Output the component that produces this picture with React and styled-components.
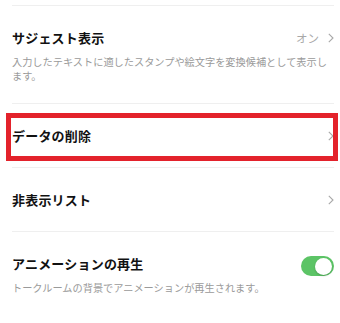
import React from 'react';
import styled, { createGlobalStyle } from 'styled-components';

const GlobalStyle = createGlobalStyle`
  body {
    margin: 0;
    background: #ffffff;
    font-family: "Noto Sans CJK JP", "Noto Sans", sans-serif;
  }
`;

const Page = styled.div`
  width: 340px;
  height: 323px;
  overflow: hidden;
  background: #ffffff;
  padding: 5px 6px 0 12px;
  box-sizing: border-box;
`;

const Row = styled.div`
  position: relative;
  border-top: 1px solid #efefef;
  min-height: 64px;
  display: flex;
  flex-direction: column;
  justify-content: ${p => (p.$detail ? 'flex-start' : 'center')};
  padding: ${p => (p.$detail ? '22px 0 20px' : '0')};
  box-sizing: border-box;
`;

const Head = styled.div`
  display: flex;
  align-items: center;
  justify-content: space-between;
  height: 20px;
`;

const Title = styled.div`
  font-size: 13px;
  letter-spacing: 0.2px;
  font-weight: 700;
  color: #111111;
  line-height: 20px;
`;

const Right = styled.div`
  display: flex;
  align-items: center;
  gap: 9px;
  color: #a8a8a8;
  font-size: 11.5px;
`;

const Desc = styled.div`
  margin-top: 7px;
  font-size: 10.2px;
  line-height: 14px;
  color: #9a9a9a;
`;

const Highlight = styled.div`
  position: absolute;
  left: -6px;
  right: -4px;
  top: 9px;
  height: 48px;
  border: 5px solid #e3222b;
  box-sizing: border-box;
  pointer-events: none;
`;

const Toggle = styled.div`
  width: 33px;
  height: 20px;
  border-radius: 10px;
  background: #5cc466;
  position: relative;
  margin-top: 4px;
  &::after {
    content: '';
    position: absolute;
    right: 2px;
    top: 1.5px;
    width: 17px;
    height: 17px;
    border-radius: 50%;
    background: #ffffff;
    box-shadow: 0 1px 2px rgba(0, 0, 0, 0.2);
  }
`;

const Chevron = () => (
  <svg width="6" height="10" viewBox="0 0 6 10">
    <polyline points="0.8,0.8 5,5 0.8,9.2" fill="none" stroke="#a8a8a8" strokeWidth="1.1" />
  </svg>
);

export default function App() {
  return (
    <Page>
      <GlobalStyle />
      <Row $detail>
        <Head>
          <Title>サジェスト表示</Title>
          <Right>
            オン
            <Chevron />
          </Right>
        </Head>
        <Desc>入力したテキストに適したスタンプや絵文字を変換候補として表示します。</Desc>
      </Row>
      <Row>
        <Head>
          <Title>データの削除</Title>
          <Right>
            <Chevron />
          </Right>
        </Head>
        <Highlight />
      </Row>
      <Row>
        <Head>
          <Title>非表示リスト</Title>
          <Right>
            <Chevron />
          </Right>
        </Head>
      </Row>
      <Row $detail>
        <Head>
          <Title>アニメーションの再生</Title>
          <Toggle />
        </Head>
        <Desc>トークルームの背景でアニメーションが再生されます。</Desc>
      </Row>
    </Page>
  );
}
